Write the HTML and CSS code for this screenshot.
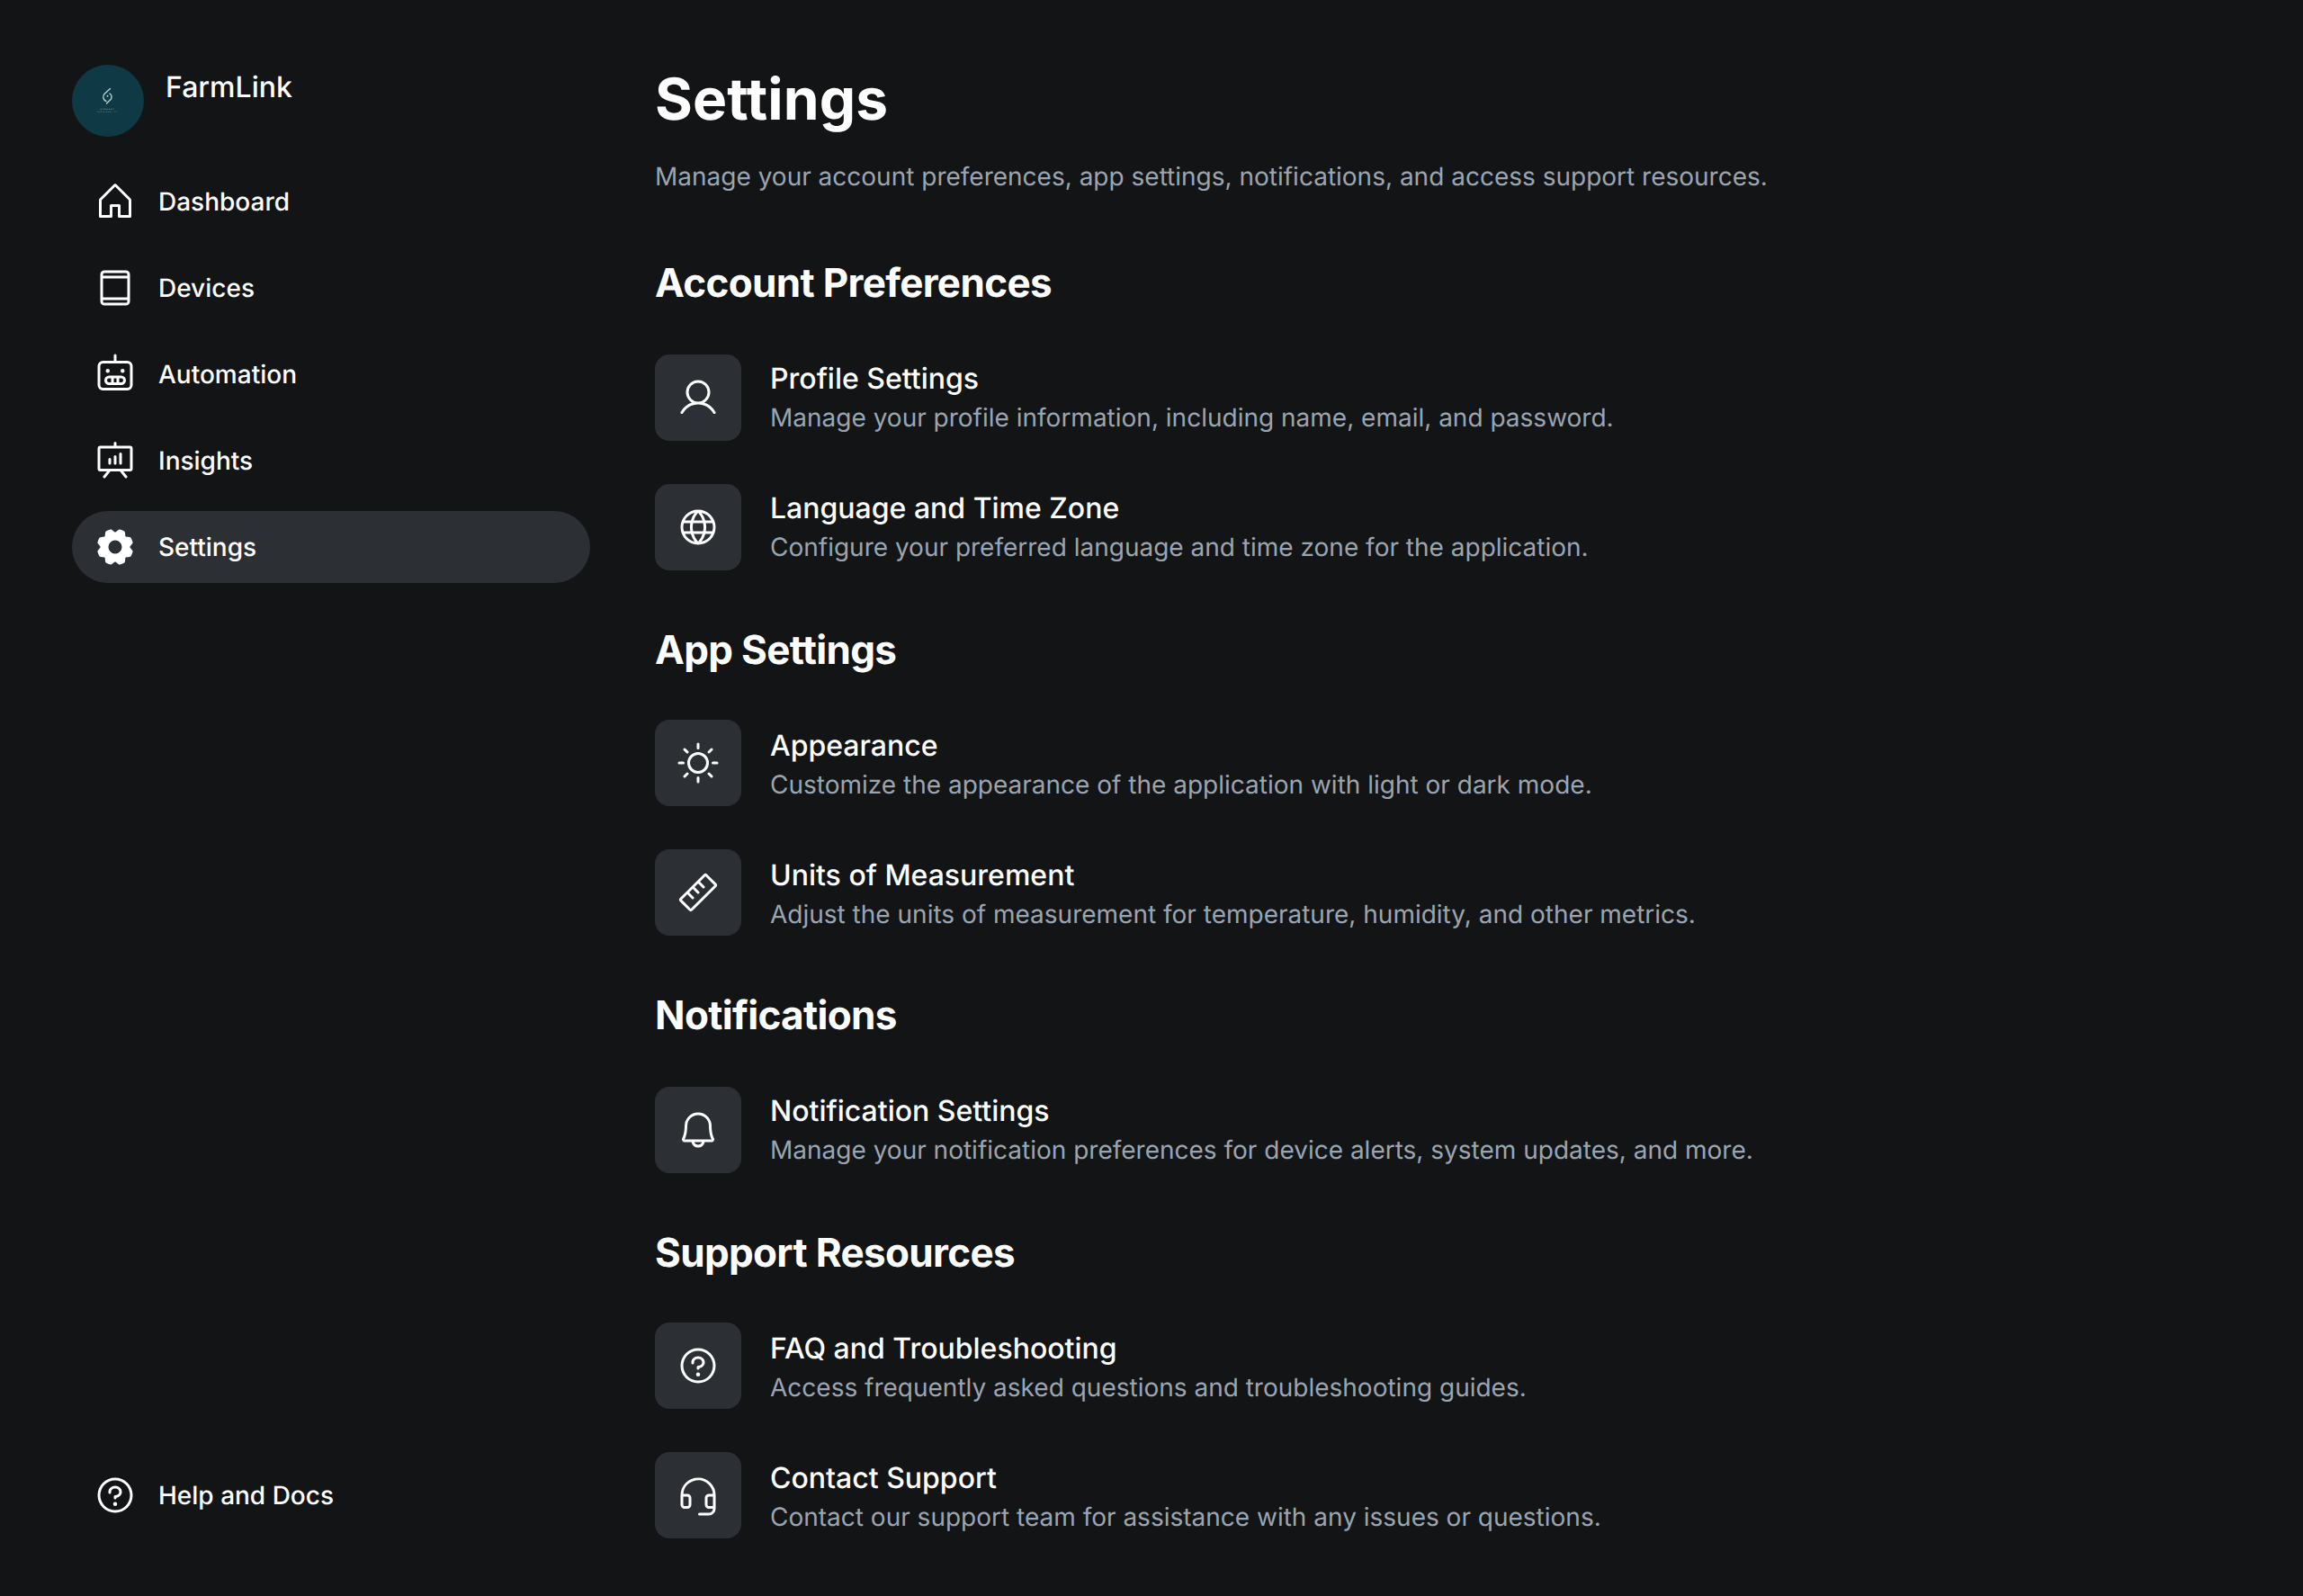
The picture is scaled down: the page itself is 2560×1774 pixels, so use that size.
FILE: index.html
```html
<!DOCTYPE html>
<html lang="en">
<head>
<meta charset="utf-8">
<title>FarmLink Settings</title>
<link rel="stylesheet" href="styles.css">
</head>
<body>
<div class="app">
  <aside class="sidebar">
    <div class="top">
      <div class="brand">
        <div class="logo">
          <svg viewBox="0 0 80 80" width="80" height="80">
            <path class="logo-mark" d="M42.500 26.500 L36 32.500 A5 5 0 0 0 38 40.500"/>
            <path class="logo-mark" d="M42 32 A5 5 0 0 1 43.500 38 L38.500 43"/>
            <circle class="logo-dot" cx="39.500" cy="34.800" r="1"/>
            <text class="logo-t1" x="39.500" y="50.300" text-anchor="middle">GINGERY</text>
            <text class="logo-t2" x="39.500" y="53" text-anchor="middle">SUSTAINABILITY</text>
          </svg>
        </div>
        <span class="brand-name">FarmLink</span>
      </div>
      <nav class="nav">
        <a class="nav-item"><svg class="icon" viewBox="0 0 256 256"><path d="M219.31,108.68l-80-80a16,16,0,0,0-22.62,0l-80,80A15.87,15.87,0,0,0,32,120v96a8,8,0,0,0,8,8h64a8,8,0,0,0,8-8V160h32v56a8,8,0,0,0,8,8h64a8,8,0,0,0,8-8V120A15.87,15.87,0,0,0,219.31,108.68ZM208,208H160V152a8,8,0,0,0-8-8H104a8,8,0,0,0-8,8v56H48V120l80-80,80,80Z"/></svg><span>Dashboard</span></a>
        <a class="nav-item"><svg class="icon" viewBox="0 0 256 256"><path d="M192,24H64A24,24,0,0,0,40,48V208a24,24,0,0,0,24,24H192a24,24,0,0,0,24-24V48A24,24,0,0,0,192,24ZM56,72H200V184H56Zm8-32H192a8,8,0,0,1,8,8v8H56V48A8,8,0,0,1,64,40ZM192,216H64a8,8,0,0,1-8-8v-8H200v8A8,8,0,0,1,192,216Z"/></svg><span>Devices</span></a>
        <a class="nav-item"><svg class="icon" viewBox="0 0 256 256"><path d="M200,48H136V16a8,8,0,0,0-16,0V48H56A32,32,0,0,0,24,80V192a32,32,0,0,0,32,32H200a32,32,0,0,0,32-32V80A32,32,0,0,0,200,48Zm16,144a16,16,0,0,1-16,16H56a16,16,0,0,1-16-16V80A16,16,0,0,1,56,64H200a16,16,0,0,1,16,16Zm-52-56H92a28,28,0,0,0,0,56h72a28,28,0,0,0,0-56Zm-28,16v24H120V152ZM80,164a12,12,0,0,1,12-12h12v24H92A12,12,0,0,1,80,164Zm84,12H152V152h12a12,12,0,0,1,0,24ZM72,108a12,12,0,1,1,12,12A12,12,0,0,1,72,108Zm88,0a12,12,0,1,1,12,12A12,12,0,0,1,160,108Z"/></svg><span>Automation</span></a>
        <a class="nav-item"><svg class="icon" viewBox="0 0 256 256"><path d="M216,40H136V24a8,8,0,0,0-16,0V40H40A16,16,0,0,0,24,56V176a16,16,0,0,0,16,16H79.36L57.75,219a8,8,0,0,0,12.5,10l29.59-37h56.32l29.59,37a8,8,0,1,0,12.5-10l-21.61-27H216a16,16,0,0,0,16-16V56A16,16,0,0,0,216,40Zm0,136H40V56H216ZM104,120v24a8,8,0,0,1-16,0V120a8,8,0,0,1,16,0Zm32-16v40a8,8,0,0,1-16,0V104a8,8,0,0,1,16,0Zm32-16v56a8,8,0,0,1-16,0V88a8,8,0,0,1,16,0Z"/></svg><span>Insights</span></a>
        <a class="nav-item active"><svg class="icon" viewBox="0 0 256 256"><path d="M216,130.16q.06-2.16,0-4.32l14.92-18.64a8,8,0,0,0,1.48-7.06,107.6,107.6,0,0,0-10.88-26.25,8,8,0,0,0-6-3.93l-23.72-2.64q-1.48-1.56-3-3L186,40.54a8,8,0,0,0-3.94-6,107.29,107.29,0,0,0-26.25-10.86,8,8,0,0,0-7.06,1.49L130.16,40Q128,40,125.84,40L107.2,25.11a8,8,0,0,0-7.06-1.48A107.6,107.6,0,0,0,73.89,34.51a8,8,0,0,0-3.93,6L67.32,64.27q-1.56,1.49-3,3L40.54,70a8,8,0,0,0-6,3.94,107.71,107.71,0,0,0-10.87,26.25,8,8,0,0,0,1.49,7.06L40,125.84Q40,128,40,130.16L25.11,148.8a8,8,0,0,0-1.48,7.06,107.6,107.6,0,0,0,10.88,26.25,8,8,0,0,0,6,3.93l23.72,2.64q1.49,1.56,3,3L70,215.46a8,8,0,0,0,3.94,6,107.71,107.71,0,0,0,26.25,10.87,8,8,0,0,0,7.06-1.49L125.84,216q2.16.06,4.32,0l18.64,14.92a8,8,0,0,0,7.06,1.48,107.21,107.21,0,0,0,26.25-10.88,8,8,0,0,0,3.93-6l2.64-23.72q1.56-1.48,3-3L215.46,186a8,8,0,0,0,6-3.94,107.71,107.71,0,0,0,10.87-26.25,8,8,0,0,0-1.49-7.06ZM128,168a40,40,0,1,1,40-40A40,40,0,0,1,128,168Z"/></svg><span>Settings</span></a>
      </nav>
    </div>
    <a class="nav-item"><svg class="icon" viewBox="0 0 256 256"><path d="M140,180a12,12,0,1,1-12-12A12,12,0,0,1,140,180ZM128,72c-22.06,0-40,16.15-40,36v4a8,8,0,0,0,16,0v-4c0-11,10.77-20,24-20s24,9,24,20-10.77,20-24,20a8,8,0,0,0-8,8v8a8,8,0,0,0,16,0v-.72c18.24-3.35,32-17.9,32-35.28C168,88.15,150.06,72,128,72Zm104,56A104,104,0,1,1,128,24,104.11,104.11,0,0,1,232,128Zm-16,0a88,88,0,1,0-88,88A88.1,88.1,0,0,0,216,128Z"/></svg><span>Help and Docs</span></a>
  </aside>
  <main class="main">
    <h1 class="title">Settings</h1>
    <p class="lead">Manage your account preferences, app settings, notifications, and access support resources.</p>

    <section class="section section-first">
      <h2 class="section-title">Account Preferences</h2>
      <div class="rows">
        <div class="row"><div class="tile"><svg class="icon" viewBox="0 0 256 256"><path d="M230.92,212c-15.23-26.33-38.7-45.21-66.09-54.16a72,72,0,1,0-73.66,0C63.78,166.78,40.31,185.66,25.08,212a8,8,0,1,0,13.85,8c18.84-32.56,52.14-52,89.07-52s70.23,19.44,89.07,52a8,8,0,1,0,13.85-8ZM72,96a56,56,0,1,1,56,56A56.06,56.06,0,0,1,72,96Z"/></svg></div><div class="text"><div class="row-title">Profile Settings</div><div class="row-desc">Manage your profile information, including name, email, and password.</div></div></div>
        <div class="row"><div class="tile"><svg class="icon" viewBox="0 0 256 256"><path d="M128,24h0A104,104,0,1,0,232,128,104.12,104.12,0,0,0,128,24Zm88,104a87.61,87.61,0,0,1-3.33,24H174.16a157.44,157.44,0,0,0,0-48h38.51A87.61,87.61,0,0,1,216,128ZM102,168H154a115.11,115.11,0,0,1-26,45A115.27,115.27,0,0,1,102,168Zm-3.9-16a140.84,140.84,0,0,1,0-48h59.88a140.84,140.84,0,0,1,0,48ZM40,128a87.61,87.61,0,0,1,3.33-24H81.84a157.44,157.44,0,0,0,0,48H43.33A87.61,87.61,0,0,1,40,128ZM154,88H102a115.11,115.11,0,0,1,26-45A115.27,115.27,0,0,1,154,88Zm52.33,0H170.71a135.28,135.28,0,0,0-22.3-45.6A88.29,88.29,0,0,1,206.37,88ZM107.59,42.4A135.28,135.28,0,0,0,85.29,88H49.63A88.29,88.29,0,0,1,107.59,42.4ZM49.63,168H85.29a135.28,135.28,0,0,0,22.3,45.6A88.29,88.29,0,0,1,49.63,168Zm98.78,45.6a135.28,135.28,0,0,0,22.3-45.6h35.66A88.29,88.29,0,0,1,148.41,213.6Z"/></svg></div><div class="text"><div class="row-title">Language and Time Zone</div><div class="row-desc">Configure your preferred language and time zone for the application.</div></div></div>
      </div>
    </section>

    <section class="section section-tight">
      <h2 class="section-title">App Settings</h2>
      <div class="rows">
        <div class="row"><div class="tile"><svg class="icon" viewBox="0 0 256 256"><path d="M120,40V16a8,8,0,0,1,16,0V40a8,8,0,0,1-16,0Zm72,88a64,64,0,1,1-64-64A64.07,64.07,0,0,1,192,128Zm-16,0a48,48,0,1,0-48,48A48.05,48.05,0,0,0,176,128ZM58.34,69.66A8,8,0,0,0,69.66,58.34l-16-16A8,8,0,0,0,42.34,53.66Zm0,116.68-16,16a8,8,0,0,0,11.32,11.32l16-16a8,8,0,0,0-11.32-11.32ZM192,72a8,8,0,0,0,5.66-2.34l16-16a8,8,0,0,0-11.32-11.32l-16,16A8,8,0,0,0,192,72Zm5.66,114.34a8,8,0,0,0-11.32,11.32l16,16a8,8,0,0,0,11.32-11.32ZM48,128a8,8,0,0,0-8-8H16a8,8,0,0,0,0,16H40A8,8,0,0,0,48,128Zm80,80a8,8,0,0,0-8,8v24a8,8,0,0,0,16,0V216A8,8,0,0,0,128,208Zm112-88H216a8,8,0,0,0,0,16h24a8,8,0,0,0,0-16Z"/></svg></div><div class="text"><div class="row-title">Appearance</div><div class="row-desc">Customize the appearance of the application with light or dark mode.</div></div></div>
        <div class="row"><div class="tile"><svg class="icon" viewBox="0 0 256 256"><path d="M235.32,73.37,182.63,20.69a16,16,0,0,0-22.63,0L20.68,160a16,16,0,0,0,0,22.63l52.69,52.68a16,16,0,0,0,22.63,0L235.32,96A16,16,0,0,0,235.32,73.37ZM84.68,224,32,171.31l32-32,26.34,26.35a8,8,0,0,0,11.32-11.32L75.31,128,96,107.31l26.34,26.35a8,8,0,0,0,11.32-11.32L107.31,96,128,75.31l26.34,26.35a8,8,0,0,0,11.32-11.32L139.31,64l32-32L224,84.69Z"/></svg></div><div class="text"><div class="row-title">Units of Measurement</div><div class="row-desc">Adjust the units of measurement for temperature, humidity, and other metrics.</div></div></div>
      </div>
    </section>

    <section class="section">
      <h2 class="section-title">Notifications</h2>
      <div class="rows">
        <div class="row"><div class="tile"><svg class="icon" viewBox="0 0 256 256"><path d="M221.8,175.94C216.25,166.38,208,139.33,208,104a80,80,0,1,0-160,0c0,35.34-8.26,62.38-13.81,71.94A16,16,0,0,0,48,200H88.81a40,40,0,0,0,78.38,0H208a16,16,0,0,0,13.8-24.06ZM128,216a24,24,0,0,1-22.62-16h45.24A24,24,0,0,1,128,216ZM48,184c7.7-13.24,16-43.92,16-80a64,64,0,1,1,128,0c0,36.05,8.28,66.73,16,80Z"/></svg></div><div class="text"><div class="row-title">Notification Settings</div><div class="row-desc">Manage your notification preferences for device alerts, system updates, and more.</div></div></div>
      </div>
    </section>

    <section class="section section-tight">
      <h2 class="section-title">Support Resources</h2>
      <div class="rows">
        <div class="row"><div class="tile"><svg class="icon" viewBox="0 0 256 256"><path d="M140,180a12,12,0,1,1-12-12A12,12,0,0,1,140,180ZM128,72c-22.06,0-40,16.15-40,36v4a8,8,0,0,0,16,0v-4c0-11,10.77-20,24-20s24,9,24,20-10.77,20-24,20a8,8,0,0,0-8,8v8a8,8,0,0,0,16,0v-.72c18.24-3.35,32-17.9,32-35.28C168,88.15,150.06,72,128,72Zm104,56A104,104,0,1,1,128,24,104.11,104.11,0,0,1,232,128Zm-16,0a88,88,0,1,0-88,88A88.1,88.1,0,0,0,216,128Z"/></svg></div><div class="text"><div class="row-title">FAQ and Troubleshooting</div><div class="row-desc">Access frequently asked questions and troubleshooting guides.</div></div></div>
        <div class="row"><div class="tile"><svg class="icon" viewBox="0 0 256 256"><path d="M201.89,54.66A103.43,103.43,0,0,0,128.79,24H128A104,104,0,0,0,24,128v56a24,24,0,0,0,24,24H64a24,24,0,0,0,24-24V144a24,24,0,0,0-24-24H40.36A88.12,88.12,0,0,1,190.54,65.93,87.39,87.39,0,0,1,215.65,120H192a24,24,0,0,0-24,24v40a24,24,0,0,0,24,24h24a24,24,0,0,1-24,24H136a8,8,0,0,0,0,16h56a40,40,0,0,0,40-40V128A103.41,103.41,0,0,0,201.89,54.66ZM64,136a8,8,0,0,1,8,8v40a8,8,0,0,1-8,8H48a8,8,0,0,1-8-8V136Zm128,56a8,8,0,0,1-8-8V144a8,8,0,0,1,8-8h24v56Z"/></svg></div><div class="text"><div class="row-title">Contact Support</div><div class="row-desc">Contact our support team for assistance with any issues or questions.</div></div></div>
      </div>
    </section>
  </main>
</div>
</body>
</html>
```

FILE: styles.css
```css
* { box-sizing: border-box; }
html, body { margin: 0; padding: 0; }
body {
  background: #121416;
  color: #fff;
  font-family: Inter, "Noto Sans", sans-serif;
  text-rendering: geometricPrecision;
}
.app {
  display: flex;
  gap: 72px;
  height: 1774px;
  padding: 72px 80px;
}
.sidebar {
  width: 576px;
  flex: none;
  display: flex;
  flex-direction: column;
  justify-content: space-between;
}
.top { display: flex; flex-direction: column; gap: 32px; }
.brand { display: flex; gap: 24px; align-items: flex-start; }
.logo {
  width: 80px;
  height: 80px;
  border-radius: 50%;
  background: #0f3a45;
  overflow: hidden;
  flex: none;
}
.logo svg { display: block; }
.logo-mark { fill: none; stroke: #b5d0cd; stroke-width: 1.4; stroke-linecap: round; }
.logo-dot { fill: #b5d0cd; }
.logo-t1 { fill: #b5d0cd; font-size: 2.2px; letter-spacing: 1px; }
.logo-t2 { fill: #8fb2b3; font-size: 1.6px; letter-spacing: .7px; }
.brand-name { font-size: 32px; line-height: 50px; font-weight: 500; }
.nav { display: flex; flex-direction: column; gap: 16px; }
.nav-item {
  display: flex;
  align-items: center;
  gap: 24px;
  height: 80px;
  padding: 0 24px;
  border-radius: 40px;
  font-size: 28px;
  line-height: 42px;
  font-weight: 500;
  color: #fff;
}
.nav-item.active { background: #2c3035; }
.icon { width: 48px; height: 48px; flex: none; fill: #fff; display: block; }
.main { flex: 1; min-width: 0; }
.title { margin: 0; font-size: 64px; line-height: 78px; font-weight: 700; letter-spacing: .15px; }
.lead { margin: 25px 0 0; font-size: 28px; line-height: 42px; color: #9ba5b0; }
.section { margin-top: 60px; }
.section-first { margin-top: 69px; }
.section-title {
  margin: 0 0 52px;
  font-size: 44px;
  line-height: 56px;
  font-weight: 700;
  letter-spacing: -0.015em;
}
.section-tight .section-title { margin-bottom: 50px; }
.section-tight .text { padding-top: 4px; }
.rows { display: flex; flex-direction: column; gap: 48px; }
.row { display: flex; align-items: center; gap: 32px; }
.tile {
  width: 96px;
  height: 96px;
  flex: none;
  border-radius: 16px;
  background: #2c3035;
  display: flex;
  align-items: center;
  justify-content: center;
}
.row-title { font-size: 32px; line-height: 45px; font-weight: 500; }
.row-desc { font-size: 28px; line-height: 43px; color: #9ba5b0; }
```
